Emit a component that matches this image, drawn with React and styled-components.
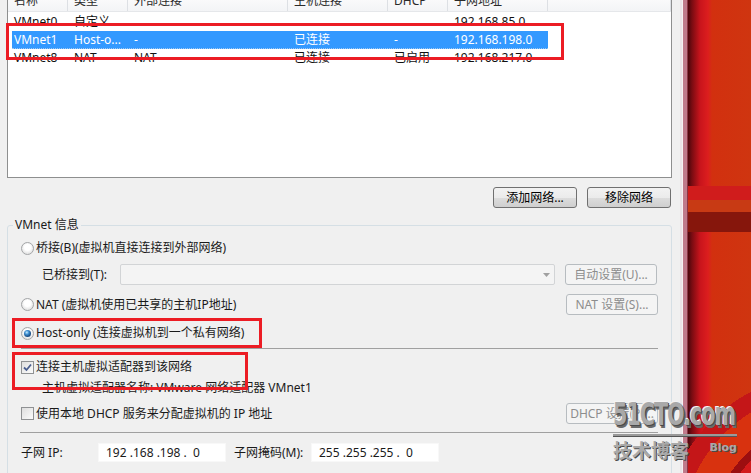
import React from "react";
import styled, { createGlobalStyle } from "styled-components";

const GlobalStyle = createGlobalStyle`
  html, body {
    margin: 0;
    padding: 0;
  }
  body {
    background: #f0f0f0;
    font-family: "Noto Sans", "Noto Sans CJK SC", sans-serif;
    font-size: 12px;
    line-height: 16px;
    color: #1a1a1a;
    overflow: hidden;
  }
`;

const Frame = styled.div`
  position: relative;
  display: flex;
  width: 751px;
  height: 473px;
  overflow: hidden;
`;

const Dialog = styled.div`
  width: 680px;
  flex: none;
  box-sizing: border-box;
  padding: 0 8px 0 7px;
  background: #f0f0f0;
  display: flex;
  flex-direction: column;
`;

const Desktop = styled.div`
  flex: 1;
  background:
    linear-gradient(to right, #ece4e8 0 2px, #f6f1f3 2px 3px, #c07a8b 3px 7px, #8c3444 7px 8px, transparent 8px),
    radial-gradient(circle at 150px 540px, #b81414 0 70px, #e2420f 70px 92px, #d21a1c 92px 112px, #9c0e10 112px 120px, #d8320f 120px 150px, #c41618 150px 168px, transparent 168px),
    linear-gradient(transparent 186px, #d01c1c 186px 200px, #c83a14 200px 212px, #86160c 212px 232px, transparent 232px),
    linear-gradient(to right, #4a060c 8px, #7a0c12 12px, #c8141c 20px, #dc1e1e 28px, #d2300f 32px, #cf3510 71px);
`;

/* ---------- list view ---------- */

const ListBox = styled.div`
  margin-top: -10px;
  height: 188px;
  flex: none;
  box-sizing: border-box;
  border: 1px solid #8e8f8f;
  background: #fff;
`;

const HeaderRow = styled.div`
  display: grid;
  grid-template-columns: 60px 60px 160px 100px 60px 100px 1fr;
  height: 20px;
  background: linear-gradient(#ffffff, #f3f4f6);
  border-bottom: 1px solid #e5e7ea;
`;

const HeaderCell = styled.div`
  padding-left: 6px;
  line-height: 20px;
  color: #2a2a2a;
  border-right: 1px solid #dde0e4;
  white-space: nowrap;
`;

const Rows = styled.div`
  padding-top: 1px;
`;

const Row = styled.div`
  display: grid;
  grid-template-columns: 56px 60px 160px 100px 60px 100px;
  box-sizing: border-box;
  width: 536px;
  height: 18px;
  line-height: 18px;
  margin-left: 4px;
  background: ${(p) => (p.$selected ? "#3399ff" : "transparent")};
  color: ${(p) => (p.$selected ? "#fff" : "#111")};
  border-bottom: 1px dotted ${(p) => (p.$selected ? "#9cc9f5" : "transparent")};
`;

const Cell = styled.div`
  padding-left: 6px;
  white-space: nowrap;
  &:first-child {
    padding-left: 2px;
  }
`;

/* ---------- buttons ---------- */

const ButtonBar = styled.div`
  display: flex;
  justify-content: flex-end;
  gap: 10px;
  margin-top: 9px;
  padding-right: 1px;
  flex: none;
`;

const Button = styled.button`
  box-sizing: border-box;
  width: ${(p) => p.$w || 84}px;
  height: 21px;
  margin: 0;
  padding: 0;
  font: inherit;
  flex: none;
  border-radius: 3px;
  border: 1px solid ${(p) => (p.disabled ? "#b7bcc0" : "#707070")};
  background: ${(p) =>
    p.disabled
      ? "#f4f4f4"
      : "linear-gradient(#f2f2f2 0%, #ebebeb 50%, #dddddd 51%, #cfcfcf 100%)"};
  color: ${(p) => (p.disabled ? "#8d8d8d" : "#000")};
  margin-left: ${(p) => (p.$push ? "auto" : "0")};
`;

/* ---------- group box ---------- */

const GroupBox = styled.fieldset`
  margin: 9px 0 0 0;
  padding: 4px 13px 0 13px;
  height: 300px;
  flex: none;
  min-width: 0;
  border: 1px solid #d5dfe5;
  border-radius: 3px;
`;

const Legend = styled.legend`
  padding: 0 2px;
  margin-left: -8px;
  line-height: 16px;
  color: #1a1a1a;
`;

const OptionRow = styled.div`
  display: flex;
  align-items: center;
  height: ${(p) => p.$h || 22}px;
  margin-top: ${(p) => p.$mt || 0}px;
  padding-left: ${(p) => p.$indent || 0}px;
  white-space: nowrap;
`;

const Radio = styled.span`
  box-sizing: border-box;
  width: 13px;
  height: 13px;
  flex: none;
  border-radius: 50%;
  border: 1px solid #a3a5a7;
  background: radial-gradient(circle at 50% 40%, #ffffff 0 3px, #e6e6e6 6px);
  position: relative;
  margin-right: 2px;
  &::after {
    content: "";
    display: ${(p) => (p.$checked ? "block" : "none")};
    position: absolute;
    left: 2px;
    top: 2px;
    width: 7px;
    height: 7px;
    border-radius: 50%;
    background: radial-gradient(circle at 40% 35%, #c5ecff 0, #3f8fd2 2px, #1b4f86 4px);
  }
`;

const Check = styled.span`
  box-sizing: border-box;
  width: 13px;
  height: 13px;
  flex: none;
  border: 1px solid #8f9193;
  background: linear-gradient(135deg, #dedede, #fbfbfb);
  margin-right: 2px;
  display: flex;
  align-items: center;
  justify-content: center;
`;

const Text = styled.span`
  color: ${(p) => (p.$muted ? "#8d8d8d" : "#1a1a1a")};
  width: ${(p) => (p.$w ? p.$w + "px" : "auto")};
  margin-left: ${(p) => p.$ml || 0}px;
  flex: none;
`;

const Combo = styled.div`
  box-sizing: border-box;
  width: 435px;
  height: 21px;
  flex: none;
  border: 1px solid #d2d4d6;
  border-radius: 2px;
  background: #f4f4f4;
  display: flex;
  align-items: center;
  justify-content: flex-end;
  padding-right: 4px;
  margin-right: 10px;
`;

const Separator = styled.div`
  height: 0;
  border-top: 1px solid #a0a0a0;
  margin: ${(p) => p.$mt || 4}px 0 0 ${(p) => p.$ml || 0}px;
`;

const IpField = styled.div`
  box-sizing: border-box;
  width: 128px;
  height: 19px;
  flex: none;
  background: #fff;
  border: 1px solid #f8f8f8;
  padding-left: 7px;
  line-height: 17px;
  white-space: pre;
  color: #1a1a1a;
`;

/* ---------- overlays ---------- */

const Mark = styled.div`
  position: absolute;
  box-sizing: border-box;
  border: 3px solid #ec1c24;
  left: ${(p) => p.$x}px;
  top: ${(p) => p.$y}px;
  width: ${(p) => p.$w}px;
  height: ${(p) => p.$h}px;
  pointer-events: none;
`;

const Watermark = styled.div`
  position: absolute;
  left: 613px;
  top: 398px;
  width: 124px;
  display: flex;
  flex-direction: column;
  color: #a9a9a9;
`;

const Brand = styled.div`
  font-family: "DejaVu Sans Condensed", "DejaVu Sans", sans-serif;
  font-weight: bold;
  font-size: 23px;
  line-height: 26px;
  letter-spacing: -1px;
  padding-top: 8px;
  transform: scaleY(1.4);
  transform-origin: left bottom;
  text-shadow: 1px 1px 0 #4a4a4a, 2px 2px 0 #6a6a6a, -1px -1px 0 #f4f4f4;
  white-space: nowrap;
`;

const Rule = styled.div`
  height: 2px;
  margin-top: 2px;
  background: #9a9a9a;
  border-bottom: 1px solid #555;
`;

const BlogLine = styled.div`
  display: flex;
  justify-content: space-between;
  align-items: flex-start;
  margin-top: 2px;
`;

const BlogCn = styled.span`
  font-family: "Noto Sans CJK SC", sans-serif;
  font-weight: bold;
  font-size: 19px;
  line-height: 22px;
  text-shadow: 1px 1px 0 #4a4a4a;
`;

const BlogEn = styled.span`
  font-family: "DejaVu Sans", sans-serif;
  font-weight: bold;
  font-size: 11px;
  line-height: 14px;
  margin-top: 2px;
  text-shadow: 1px 1px 0 #4a4a4a;
`;

const networks = [
  { name: "VMnet0", type: "自定义", ext: "", host: "", dhcp: "", subnet: "192.168.85.0" },
  { name: "VMnet1", type: "Host-o...", ext: "-", host: "已连接", dhcp: "-", subnet: "192.168.198.0", selected: true },
  { name: "VMnet8", type: "NAT", ext: "NAT", host: "已连接", dhcp: "已启用", subnet: "192.168.217.0" },
];

const CheckMark = () => (
  <svg width="9" height="9" viewBox="0 0 9 9">
    <path d="M1 4.5 L3.5 7 L8 1.5" fill="none" stroke="#4a5e8f" strokeWidth="1.8" />
  </svg>
);

const App = () => {
  return (
    <Frame>
      <GlobalStyle />
      <Dialog>
        <ListBox>
          <HeaderRow>
            <HeaderCell>名称</HeaderCell>
            <HeaderCell>类型</HeaderCell>
            <HeaderCell>外部连接</HeaderCell>
            <HeaderCell>主机连接</HeaderCell>
            <HeaderCell>DHCP</HeaderCell>
            <HeaderCell>子网地址</HeaderCell>
            <HeaderCell />
          </HeaderRow>
          <Rows>
            {networks.map((n) => (
              <Row key={n.name} $selected={n.selected}>
                <Cell>{n.name}</Cell>
                <Cell>{n.type}</Cell>
                <Cell>{n.ext}</Cell>
                <Cell>{n.host}</Cell>
                <Cell>{n.dhcp}</Cell>
                <Cell>{n.subnet}</Cell>
              </Row>
            ))}
          </Rows>
        </ListBox>

        <ButtonBar>
          <Button>添加网络...</Button>
          <Button>移除网络</Button>
        </ButtonBar>

        <GroupBox>
          <Legend>VMnet 信息</Legend>

          <OptionRow $h={22}>
            <Radio />
            <Text>桥接(B)(虚拟机直接连接到外部网络)</Text>
          </OptionRow>

          <OptionRow $h={21} $mt={5} $indent={21}>
            <Text $w={78}>已桥接到(T):</Text>
            <Combo>
              <svg width="7" height="4" viewBox="0 0 7 4">
                <path d="M0 0 H7 L3.5 4 Z" fill="#a0a0a0" />
              </svg>
            </Combo>
            <Button disabled $w={92}>自动设置(U)...</Button>
          </OptionRow>

          <OptionRow $h={21} $mt={9}>
            <Radio />
            <Text>NAT (虚拟机使用已共享的主机IP地址)</Text>
            <Button disabled $w={92} $push>NAT 设置(S)...</Button>
          </OptionRow>

          <OptionRow $h={22} $mt={7}>
            <Radio $checked />
            <Text>Host-only (连接虚拟机到一个私有网络)</Text>
          </OptionRow>

          <Separator $mt={4} />

          <OptionRow $h={22} $mt={7}>
            <Check>
              <CheckMark />
            </Check>
            <Text>连接主机虚拟适配器到该网络</Text>
          </OptionRow>

          <OptionRow $h={20} $indent={21}>
            <Text>主机虚拟适配器名称: VMware 网络适配器 VMnet1</Text>
          </OptionRow>

          <OptionRow $h={21} $mt={5}>
            <Check />
            <Text>使用本地 DHCP 服务来分配虚拟机的 IP 地址</Text>
            <Button disabled $w={92} $push>DHCP 设置(P)...</Button>
          </OptionRow>

          <Separator $mt={8} $ml={-1} />

          <OptionRow $h={19} $mt={10} $indent={-1}>
            <Text $w={77}>子网 IP:</Text>
            <IpField>{"192 .168 .198 .  0"}</IpField>
            <Text $w={77} $ml={8}>子网掩码(M):</Text>
            <IpField>{"255 .255 .255 .  0"}</IpField>
          </OptionRow>
        </GroupBox>
      </Dialog>
      <Desktop />

      <Mark $x={6} $y={23} $w={558} $h={37} />
      <Mark $x={12} $y={318} $w={250} $h={30} />
      <Mark $x={12} $y={352} $w={236} $h={38} />

      <Watermark>
        <Brand>51CTO.com</Brand>
        <Rule />
        <BlogLine>
          <BlogCn>技术博客</BlogCn>
          <BlogEn>Blog</BlogEn>
        </BlogLine>
      </Watermark>
    </Frame>
  );
};

export default App;
